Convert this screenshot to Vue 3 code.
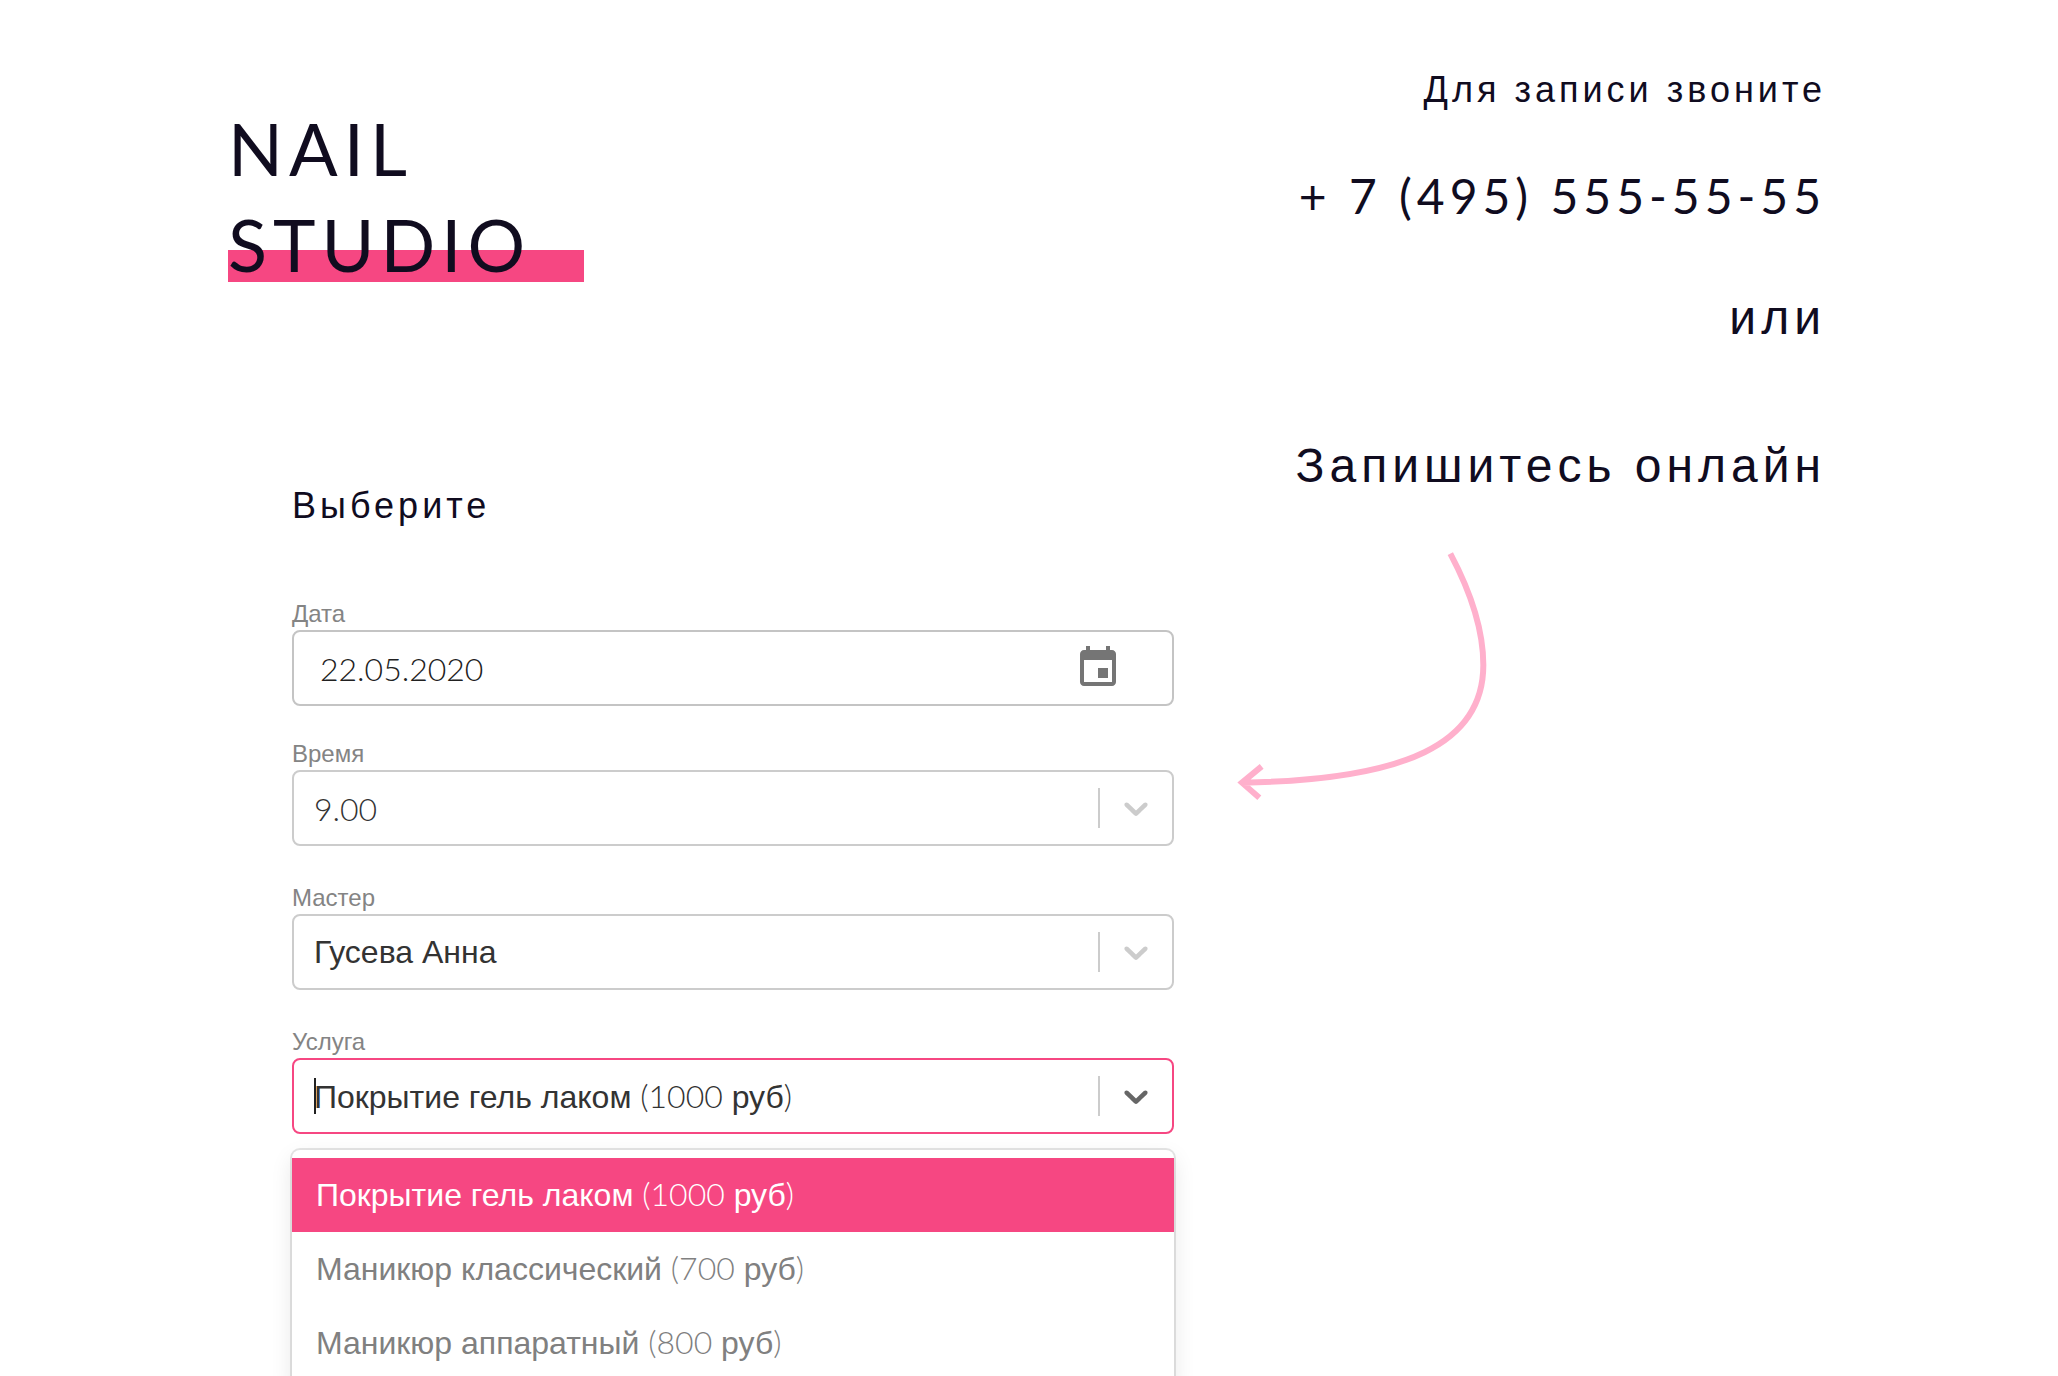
<script setup>
import { ref } from 'vue'

const date = ref('22.05.2020')
const time = ref('9.00')
const master = ref('Гусева Анна')
const service = ref('Покрытие гель лаком (1000 руб)')

const services = [
  'Покрытие гель лаком (1000 руб)',
  'Маникюр классический (700 руб)',
  'Маникюр аппаратный (800 руб)'
]

// Digits and brackets are set in the numeral face, words in the text face.
const parts = (text) =>
  text
    .split(/([\d()]+)/)
    .filter(Boolean)
    .map((value) => ({ value, numeral: /[\d()]/.test(value) }))

const chevron =
  'M4.516 7.548c0.436-0.446 1.043-0.481 1.576 0l3.908 3.747 3.908-3.747c0.533-0.481 1.141-0.446 1.574 0 0.436 0.445 0.408 1.197 0 1.615-0.406 0.418-4.695 4.502-4.695 4.502-0.217 0.223-0.502 0.335-0.787 0.335s-0.57-0.112-0.789-0.335c0 0-4.287-4.084-4.695-4.502s-0.436-1.17 0-1.615z'
</script>

<template>
  <div class="page">
    <div class="left">
      <h1 class="logo">
        <span>NAIL</span>
        <span class="marked">STUDIO</span>
      </h1>

      <form class="booking" @submit.prevent>
        <h2 class="choose">Выберите</h2>

        <div class="field">
          <label for="date">Дата</label>
          <div class="control date">
            <input id="date" v-model="date" type="text" class="numeral" />
            <button type="button" class="calendar" aria-label="Открыть календарь">
              <svg viewBox="0 0 24 24" width="48" height="48" aria-hidden="true">
                <path d="M17 12h-5v5h5v-5zM16 1v2H8V1H6v2H5c-1.11 0-1.99.9-1.99 2L3 19c0 1.1.89 2 2 2h14c1.1 0 2-.9 2-2V5c0-1.1-.9-2-2-2h-1V1h-2zm3 18H5V8h14v11z" />
              </svg>
            </button>
          </div>
        </div>

        <div class="field">
          <label for="time">Время</label>
          <div class="control">
            <select id="time" v-model="time" class="numeral">
              <option>9.00</option>
            </select>
            <span class="arrow">
              <svg viewBox="0 0 20 20" width="40" height="40" aria-hidden="true"><path :d="chevron" /></svg>
            </span>
          </div>
        </div>

        <div class="field">
          <label for="master">Мастер</label>
          <div class="control">
            <select id="master" v-model="master">
              <option>Гусева Анна</option>
            </select>
            <span class="arrow">
              <svg viewBox="0 0 20 20" width="40" height="40" aria-hidden="true"><path :d="chevron" /></svg>
            </span>
          </div>
        </div>

        <div class="field">
          <label for="service">Услуга</label>
          <div class="control open">
            <i class="caret"></i>
            <button
              id="service"
              type="button"
              class="value"
              role="combobox"
              aria-expanded="true"
              aria-controls="services"
            ><span v-for="(part, i) in parts(service)" :key="i" :class="{ numeral: part.numeral }">{{ part.value }}</span></button>
            <span class="arrow">
              <svg viewBox="0 0 20 20" width="40" height="40" aria-hidden="true"><path :d="chevron" /></svg>
            </span>
            <ul id="services" class="menu" role="listbox">
              <li
                v-for="item in services"
                :key="item"
                role="option"
                :aria-selected="item === service"
                :class="{ selected: item === service }"
                @click="service = item"
              ><span v-for="(part, i) in parts(item)" :key="i" :class="{ numeral: part.numeral }">{{ part.value }}</span></li>
            </ul>
          </div>
        </div>
      </form>
    </div>

    <aside class="contact">
      <p class="call">Для записи звоните</p>
      <a class="phone" href="tel:+74955555555">+ 7 (495) 555-55-55</a>
      <p class="or">или</p>
      <p class="online">Запишитесь онлайн</p>
      <svg class="pointer" viewBox="111 60 750 750" width="250" height="250" aria-hidden="true">
        <path d="M751 71C830 220 850 330 850 405C850 640 620 750 128 758M185 709L126 758L178 803" />
      </svg>
    </aside>
  </div>
</template>

<style>
body {
  background: #fff;
}
</style>

<style scoped>
.page {
  box-sizing: border-box;
  display: grid;
  grid-template-columns: 946fr 656fr;
  align-items: start;
  height: 100vh;
  padding: 0 228px;
  overflow: hidden;
  color: #100c1f;
  font-family: 'Liberation Sans', sans-serif;
}

h1,
h2,
p,
ul {
  margin: 0;
  padding: 0;
  font-weight: 400;
}

.logo {
  display: flex;
  flex-direction: column;
  align-items: flex-start;
  margin-top: 100px;
  font-family: Lato, sans-serif;
  font-size: 72px;
  line-height: 96px;
  letter-spacing: 6px;
}

.marked {
  width: 356px;
  background: linear-gradient(#f64782, #f64782) 0 54px / 100% 32px no-repeat;
}

.booking {
  margin: 190px 0 0 64px;
}

.choose {
  margin-bottom: 68px;
  font-size: 36px;
  line-height: 48px;
  letter-spacing: 4px;
}

.field {
  margin-bottom: 36px;
}

.field:nth-of-type(1) {
  margin-bottom: 32px;
}

label {
  display: block;
  color: #848484;
  font-size: 24px;
  line-height: 32px;
}

.control {
  box-sizing: border-box;
  position: relative;
  display: flex;
  align-items: center;
  height: 76px;
  border: 2px solid #ccc;
  border-radius: 8px;
  color: #333;
}

.date {
  border-color: #c4c4c4;
  color: #212121;
}

input,
select,
.value {
  flex: 1;
  align-self: stretch;
  min-width: 0;
  padding: 0 20px;
  border: 0;
  outline: 0;
  appearance: none;
  background: none;
  color: inherit;
  font-family: 'Liberation Sans', sans-serif;
  font-size: 32px;
  text-align: left;
}

.date input {
  padding-left: 26px;
}

.numeral {
  font-family: Lato, sans-serif;
  font-weight: 300;
}

.calendar {
  height: 48px;
  margin-right: 50px;
  padding: 0;
  border: 0;
  background: none;
}

.calendar svg {
  display: block;
  fill: #757575;
}

.arrow {
  padding: 0 16px;
  border-left: 2px solid #ccc;
  pointer-events: none;
}

.arrow svg {
  display: block;
  fill: #ccc;
}

.open {
  border-color: #f64782;
}

.open .arrow svg {
  fill: #666;
}

.caret {
  position: absolute;
  top: 18px;
  left: 20px;
  width: 2px;
  height: 36px;
  background: #212121;
}

.menu {
  position: absolute;
  top: 90px;
  right: -2px;
  left: -2px;
  padding: 8px 0;
  border-radius: 8px;
  background: #fff;
  box-shadow: 0 0 0 2px rgba(0, 0, 0, 0.1), 0 8px 22px rgba(0, 0, 0, 0.1);
  list-style: none;
}

.menu li {
  height: 74px;
  padding: 0 24px;
  color: #808080;
  font-size: 32px;
  line-height: 72px;
}

.menu .selected {
  background: #f64782;
  color: #fff;
}

.contact {
  display: flex;
  flex-direction: column;
  align-items: flex-end;
  padding: 66px 4px 0 0;
  font-size: 48px;
  line-height: 64px;
  letter-spacing: 5px;
}

.call {
  font-size: 36px;
  line-height: 48px;
  letter-spacing: 4px;
}

.phone {
  margin-top: 50px;
  color: inherit;
  font-family: Lato, sans-serif;
  text-decoration: none;
}

.or {
  margin-top: 58px;
}

.online {
  margin-top: 84px;
}

.pointer {
  margin: 52px 339px 0 0;
  fill: none;
  stroke: #ffb0cc;
  stroke-width: 18;
}
</style>
